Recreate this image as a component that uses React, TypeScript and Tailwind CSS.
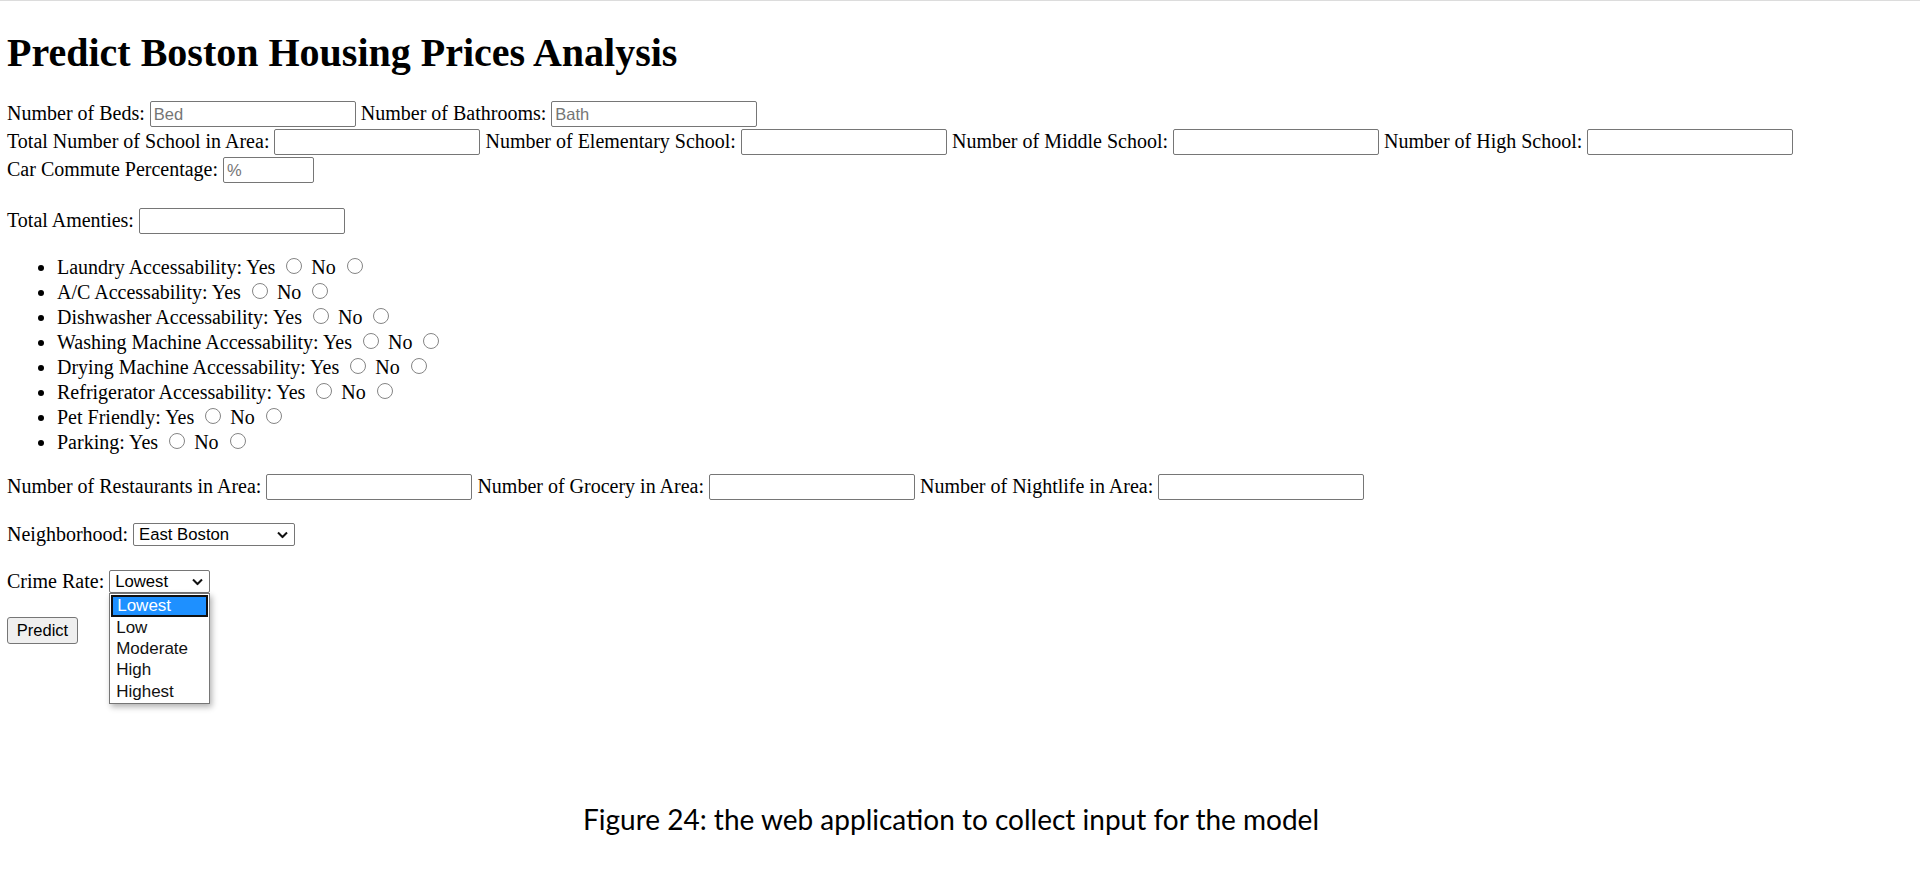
import React from "react";

const sans = "font-['Liberation_Sans',Arial,sans-serif]";
const inputCls = `inline-block h-[26px] border border-[#767676] rounded-[2px] bg-white px-[3px] ${sans} text-[16.5px] text-black placeholder:text-[#757575] outline-none align-baseline`;

function Field({ label, placeholder, w = "w-[206px]" }: { label: string; placeholder?: string; w?: string }) {
  return (
    <>
      {label}{" "}
      <input type="text" placeholder={placeholder} className={`${inputCls} ${w}`} />{" "}
    </>
  );
}

function Radio({ name }: { name: string }) {
  return (
    <input
      type="radio"
      name={name}
      className="appearance-none inline-block w-[16px] h-[16px] rounded-full border border-[#858585] bg-white ml-[6px] mr-[4px] mt-[4px] align-baseline"
    />
  );
}

function Chevron() {
  return (
    <svg className="pointer-events-none absolute right-[7px] top-1/2 -translate-y-1/2" width="11" height="7" viewBox="0 0 11 7">
      <path d="M1 1 L5.5 5.5 L10 1" fill="none" stroke="#111" strokeWidth="2" />
    </svg>
  );
}

function FakeSelect({ value, w, options }: { value: string; w: string; options: string[] }) {
  return (
    <span className={`relative inline-block ${w}`}>
      <select
        defaultValue={value}
        className={`appearance-none block w-full h-[23px] border border-[#767676] rounded-[2px] bg-white pl-[5px] ${sans} text-[16.7px] leading-[21px] text-black outline-none`}
      >
        {options.map(o => <option key={o}>{o}</option>)}
      </select>
      <Chevron />
    </span>
  );
}

const amenities = [
  "Laundry Accessability",
  "A/C Accessability",
  "Dishwasher Accessability",
  "Washing Machine Accessability",
  "Drying Machine Accessability",
  "Refrigerator Accessability",
  "Pet Friendly",
  "Parking",
];

const crime = ["Lowest", "Low", "Moderate", "High", "Highest"];

export default function App() {
  return (
    <div className="min-h-screen bg-white border-t border-[#dcdcdc] font-['Liberation_Serif','Times_New_Roman',serif] text-[20px] leading-[normal] text-black">
      <div className="pl-[7px]">
        <h1 className="mt-[28px] mb-[25px] text-[40px] font-bold leading-[normal]">Predict Boston Housing Prices Analysis</h1>

        <div className="h-[28px] whitespace-nowrap">
          <Field label="Number of Beds:" placeholder="Bed" />
          <Field label="Number of Bathrooms:" placeholder="Bath" />
        </div>
        <div className="h-[28px] whitespace-nowrap">
          <Field label="Total Number of School in Area:" />
          <Field label="Number of Elementary School:" />
          <Field label="Number of Middle School:" />
          <Field label="Number of High School:" />
        </div>
        <div className="h-[28px] whitespace-nowrap">
          <Field label="Car Commute Percentage:" placeholder="%" w="w-[91px]" />
        </div>

        <div className="mt-[22.5px] h-[27.5px] whitespace-nowrap">
          <Field label="Total Amenties:" />
        </div>

        <ul className="mt-[19px] list-disc pl-[50px]">
          {amenities.map(a => (
            <li key={a} className="whitespace-nowrap">
              {a}: Yes{" "}<Radio name={a} />{" "}No{" "}<Radio name={a} />
            </li>
          ))}
        </ul>

        <div className="mt-[19.5px] h-[27.5px] whitespace-nowrap">
          <Field label="Number of Restaurants in Area:" />
          <Field label="Number of Grocery in Area:" />
          <Field label="Number of Nightlife in Area:" />
        </div>

        <div className="mt-[20px] flex h-[27.5px] items-center gap-[5px]">
          <span>Neighborhood:</span>
          <FakeSelect value="East Boston" w="w-[162px]" options={["East Boston", "Back Bay", "Beacon Hill", "Dorchester", "Roxbury"]} />
        </div>

        <div className="mt-[19px] flex h-[27.5px] items-center gap-[5px]">
          <span>Crime Rate:</span>
          <span className="relative inline-block">
            <FakeSelect value="Lowest" w="w-[101px]" options={crime} />
            <div className={`absolute left-0 top-full z-10 w-[101px] border border-[#767676] bg-white py-[1px] shadow-[2px_3px_6px_rgba(0,0,0,0.3)] ${sans} text-[17px] leading-[21.4px]`}>
              {crime.map((c, i) => (
                <div
                  key={c}
                  className={i === 0 ? "mx-[1px] border-2 border-[#101010] bg-[#1e90ff] pl-[4px] leading-[17.4px] text-white" : "pl-[6px] text-[#111]"}
                >
                  {c}
                </div>
              ))}
            </div>
          </span>
        </div>

        <div className="mt-[21.5px] flex h-[27px] items-center">
          <button className={`h-[27px] w-[71px] rounded-[3px] border border-[#767676] bg-[#efefef] ${sans} text-[16.5px] text-black`}>
            Predict
          </button>
        </div>

        <p className="mt-[159px] pr-[25px] text-center font-['Lato','Carlito',sans-serif] text-[28px] leading-[32px] text-black">
          Figure 24: the web application to collect input for the model
        </p>
      </div>
    </div>
  );
}
